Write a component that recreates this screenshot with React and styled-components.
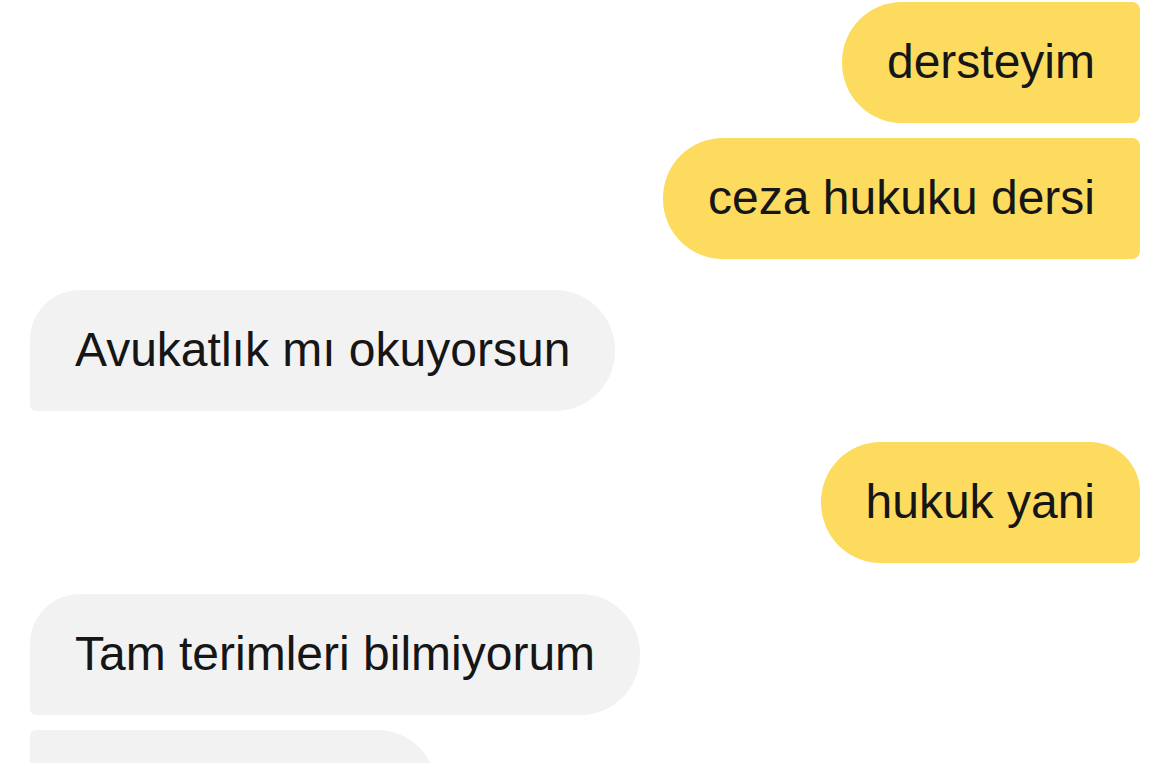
import React from "react";
import styled, { createGlobalStyle } from "styled-components";

const Global = createGlobalStyle`
  html, body { margin: 0; padding: 0; background: #ffffff; }
  body { font-family: "Liberation Sans", Arial, sans-serif; overflow: hidden; }
`;

const Thread = styled.div`
  display: flex;
  flex-direction: column;
  gap: 31px;
  padding: 2px 29px 0 30px;
  height: 763px;
  box-sizing: border-box;
  overflow: hidden;
`;

const Group = styled.div`
  display: flex;
  flex-direction: column;
  gap: 15px;
  align-items: ${(p) => (p.$mine ? "flex-end" : "flex-start")};
`;

const Bubble = styled.div`
  box-sizing: border-box;
  height: 121px;
  flex-shrink: 0;
  display: flex;
  align-items: center;
  padding: 0 45px 2px 45px;
  font-size: 48px;
  color: #161616;
  background: ${(p) => (p.$mine ? "#fddb5f" : "#f2f2f2")};
  border-radius: ${(p) => p.$radius};
  white-space: nowrap;
  ${(p) => (p.$width ? `width: ${p.$width}px;` : "")}
`;

const groups = [
  {
    mine: true,
    items: [
      { text: "dersteyim", radius: "60px 8px 8px 60px" },
      { text: "ceza hukuku dersi", radius: "60px 8px 8px 60px" },
    ],
  },
  {
    mine: false,
    items: [{ text: "Avukatlık mı okuyorsun", radius: "50px 60px 60px 6px" }],
  },
  {
    mine: true,
    items: [{ text: "hukuk yani", radius: "60px 50px 8px 60px" }],
  },
  {
    mine: false,
    items: [
      { text: "Tam terimleri bilmiyorum", radius: "50px 60px 60px 6px" },
      { text: "", radius: "6px 60px 60px 6px", width: 407 },
    ],
  },
];

export default function App() {
  return (
    <>
      <Global />
      <Thread>
        {groups.map((g, i) => (
          <Group key={i} $mine={g.mine}>
            {g.items.map((m, j) => (
              <Bubble key={j} $mine={g.mine} $radius={m.radius} $width={m.width}>
                {m.text}
              </Bubble>
            ))}
          </Group>
        ))}
      </Thread>
    </>
  );
}
